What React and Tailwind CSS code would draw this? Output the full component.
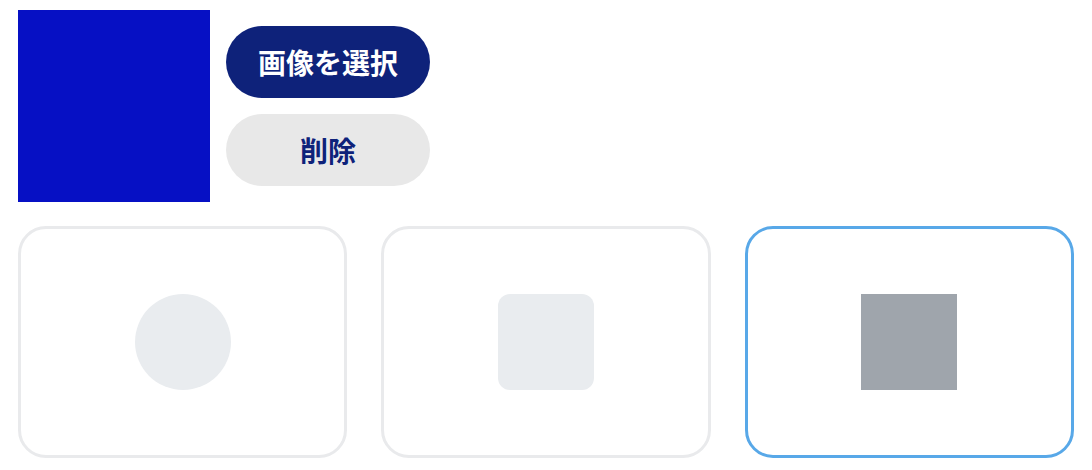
import React from 'react';

const Option = ({ selected, children }) => (
    <button
        className={
            'h-[232px] rounded-[28px] border-[3px] bg-white flex items-center justify-center ' +
            (selected ? 'border-[#58a8e8]' : 'border-[#e9eaec]')
        }
    >
        {children}
    </button>
);

const App = () => {
    return (
        <div
            className="w-[1092px] h-[470px] bg-white px-[18px] pt-[10px]"
            style={{ fontFamily: '"Noto Sans CJK JP", "Noto Sans", sans-serif' }}
        >
            <div className="flex gap-4">
                <div className="w-[192px] h-[192px] bg-[#0610c4]" />
                <div className="flex flex-col gap-4 pt-4">
                    <button className="w-[204px] h-[72px] rounded-full bg-[#0e227a] text-white text-[28px] font-bold">
                        画像を選択
                    </button>
                    <button className="w-[204px] h-[72px] rounded-full bg-[#e8e8e8] text-[#0e227a] text-[28px] font-bold">
                        削除
                    </button>
                </div>
            </div>
            <div className="grid grid-cols-3 gap-[34px] mt-6">
                <Option>
                    <div className="w-24 h-24 rounded-full bg-[#e9ecef]" />
                </Option>
                <Option>
                    <div className="w-24 h-24 rounded-xl bg-[#e9ecef]" />
                </Option>
                <Option selected>
                    <div className="w-24 h-24 bg-[#9fa5ac]" />
                </Option>
            </div>
        </div>
    );
};

export default App;
